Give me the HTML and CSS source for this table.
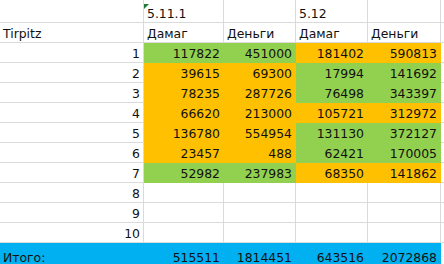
FILE: index.html
```html
<!DOCTYPE html>
<html>
<head>
<meta charset="utf-8">
<link rel="stylesheet" href="styles.css">
</head>
<body>
<div class="sheet">
  <div class="c"></div><div class="c note">5.11.1</div><div class="c"></div><div class="c">5.12</div><div class="c"></div><div class="c"></div>

  <div class="c">Tirpitz</div><div class="c">Дамаг</div><div class="c">Деньги</div><div class="c">Дамаг</div><div class="c">Деньги</div><div class="c"></div>

  <div class="c r">1</div><div class="c r g">117822</div><div class="c r g">451000</div><div class="c r o">181402</div><div class="c r o">590813</div><div class="c"></div>
  <div class="c r">2</div><div class="c r o">39615</div><div class="c r o">69300</div><div class="c r g">17994</div><div class="c r g">141692</div><div class="c"></div>
  <div class="c r">3</div><div class="c r o">78235</div><div class="c r o">287726</div><div class="c r g">76498</div><div class="c r g">343397</div><div class="c"></div>
  <div class="c r">4</div><div class="c r o">66620</div><div class="c r o">213000</div><div class="c r o">105721</div><div class="c r o">312972</div><div class="c"></div>
  <div class="c r">5</div><div class="c r o">136780</div><div class="c r o">554954</div><div class="c r g">131130</div><div class="c r g">372127</div><div class="c"></div>
  <div class="c r">6</div><div class="c r o">23457</div><div class="c r o">488</div><div class="c r g">62421</div><div class="c r g">170005</div><div class="c"></div>
  <div class="c r">7</div><div class="c r g">52982</div><div class="c r g">237983</div><div class="c r o">68350</div><div class="c r o">141862</div><div class="c"></div>
  <div class="c r">8</div><div class="c"></div><div class="c"></div><div class="c"></div><div class="c"></div><div class="c"></div>
  <div class="c r">9</div><div class="c"></div><div class="c"></div><div class="c"></div><div class="c"></div><div class="c"></div>
  <div class="c r">10</div><div class="c"></div><div class="c"></div><div class="c"></div><div class="c"></div><div class="c"></div>

  <div class="c b total">Итого:</div><div class="c r b total">515511</div><div class="c r b total">1814451</div><div class="c r b total">643516</div><div class="c r b total">2072868</div><div class="c total"></div>
</div>
</body>
</html>
```

FILE: styles.css
```css
html, body {
  margin: 0;
  padding: 0;
  background: #ffffff;
}
.sheet {
  display: grid;
  grid-template-columns: 144px 80px 72px 72px 73px 1fr;
  grid-template-rows: 23px repeat(11, 20px) 22px;
  width: 444px;
  font-family: "DejaVu Sans", Verdana, sans-serif;
  font-size: 12.4px;
  color: #111;
}
.c {
  position: relative;
  box-sizing: border-box;
  border-right: 1px solid #dadada;
  border-bottom: 1px solid #dadada;
  display: flex;
  align-items: flex-end;
  padding: 0 3px 1px 3px;
  white-space: nowrap;
  line-height: 15px;
}
.r {
  justify-content: flex-end;
}
.g {
  background: #92d050;
  border-color: #92d050;
}
.o {
  background: #ffc000;
  border-color: #ffc000;
}
.b {
  background: #00b0f0;
  border-color: #00b0f0;
}
.total {
  border-bottom: none;
  padding-bottom: 0;
}
.note::before {
  content: "";
  position: absolute;
  left: 0;
  top: 4px;
  width: 0;
  height: 0;
  border-top: 5px solid #1e7b3c;
  border-right: 5px solid transparent;
}
```
